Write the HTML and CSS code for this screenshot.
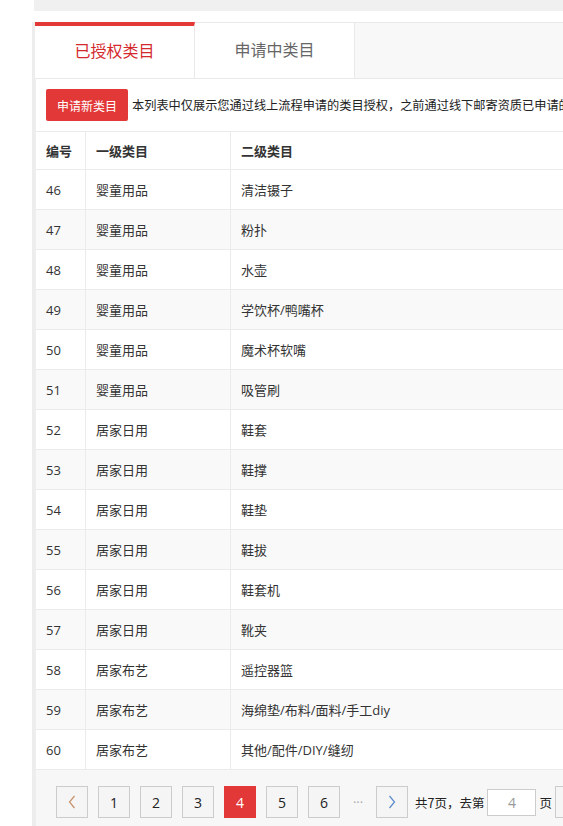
FILE: index.html
```html
<!DOCTYPE html>
<html lang="zh-CN">
<head>
    <meta charset="UTF-8">
    <title>类目授权</title>
    <link rel="stylesheet" href="styles.css">
</head>
<body>
    <div class="top-bar"></div>
    <div class="main">
        <div class="tabs">
            <div class="tab active">已授权类目</div>
            <div class="tab">申请中类目</div>
        </div>
        <div class="panel">
            <div class="toolbar">
                <button class="btn-apply">申请新类目</button>
                <span class="tip">本列表中仅展示您通过线上流程申请的类目授权，之前通过线下邮寄资质已申请的类目不在此处展示</span>
            </div>
            <table class="cat-table">
                <thead>
                    <tr>
                        <th class="col-no">编号</th>
                        <th class="col-first">一级类目</th>
                        <th>二级类目</th>
                    </tr>
                </thead>
                <tbody>
                    <tr><td>46</td><td>婴童用品</td><td>清洁镊子</td></tr>
                    <tr><td>47</td><td>婴童用品</td><td>粉扑</td></tr>
                    <tr><td>48</td><td>婴童用品</td><td>水壶</td></tr>
                    <tr><td>49</td><td>婴童用品</td><td>学饮杯/鸭嘴杯</td></tr>
                    <tr><td>50</td><td>婴童用品</td><td>魔术杯软嘴</td></tr>
                    <tr><td>51</td><td>婴童用品</td><td>吸管刷</td></tr>
                    <tr><td>52</td><td>居家日用</td><td>鞋套</td></tr>
                    <tr><td>53</td><td>居家日用</td><td>鞋撑</td></tr>
                    <tr><td>54</td><td>居家日用</td><td>鞋垫</td></tr>
                    <tr><td>55</td><td>居家日用</td><td>鞋拔</td></tr>
                    <tr><td>56</td><td>居家日用</td><td>鞋套机</td></tr>
                    <tr><td>57</td><td>居家日用</td><td>靴夹</td></tr>
                    <tr><td>58</td><td>居家布艺</td><td>遥控器篮</td></tr>
                    <tr><td>59</td><td>居家布艺</td><td>海绵垫/布料/面料/手工diy</td></tr>
                    <tr><td>60</td><td>居家布艺</td><td>其他/配件/DIY/缝纫</td></tr>
                </tbody>
            </table>
            <div class="pager">
                <a class="page-btn arrow">
                    <svg width="10" height="14" viewBox="0 0 10 14"><path d="M7.5 1 L2.5 7 L7.5 13" fill="none" stroke="#c8906a" stroke-width="1.2"/></svg>
                </a>
                <a class="page-btn">1</a>
                <a class="page-btn">2</a>
                <a class="page-btn">3</a>
                <a class="page-btn current">4</a>
                <a class="page-btn">5</a>
                <a class="page-btn">6</a>
                <span class="dots">···</span>
                <a class="page-btn arrow">
                    <svg width="10" height="14" viewBox="0 0 10 14"><path d="M2.5 1 L7.5 7 L2.5 13" fill="none" stroke="#5a8ac8" stroke-width="1.2"/></svg>
                </a>
                <span class="jump jump-label">共7页，去第</span>
                <input class="jump-input" type="text" value="4">
                <span class="jump">页</span>
                <a class="page-btn go"></a>
            </div>
        </div>
    </div>
</body>
</html>
```

FILE: styles.css
```css
html, body {
    overflow: hidden;
}

body {
    margin: 0;
    background: #fff;
    color: #333;
    font-family: "Open Sans", "Noto Sans CJK SC", sans-serif;
    font-size: 13px;
}

.top-bar {
    margin-left: 34px;
    width: 1000px;
    height: 11px;
    background: #f0f0f0;
}

.main {
    margin-top: 11px;
    margin-left: 32px;
    width: 1000px;
    border-left: 3px solid #ededed;
}

/* tabs */
.tabs {
    display: flex;
    height: 55px;
    background: #f8f8f8;
    border-top: 1px solid #e9e9e9;
}

.tab {
    width: 160px;
    border-right: 1px solid #e9e9e9;
    background: #fff;
    color: #666;
    font-size: 16px;
    text-align: center;
    line-height: 55px;
    box-sizing: border-box;
}

.tab.active {
    color: #d42a2e;
    border-top: 4px solid #e23838;
    margin-top: -1px;
    line-height: 50px;
    height: 56px;
}

/* panel */
.panel {
    border-left: 1px solid #eee;
    border-top: 1px solid #e9e9e9;
}

.toolbar {
    display: flex;
    align-items: center;
    height: 52px;
    padding-left: 10px;
}

.btn-apply {
    height: 32px;
    padding: 0 11px;
    border: none;
    border-radius: 2px;
    background: #e23838;
    color: #fff;
    font-family: "Noto Sans CJK SC", sans-serif;
    font-size: 12px;
    margin-right: 4px;
}

.tip {
    white-space: nowrap;
    color: #222;
    font-family: "Noto Sans CJK SC", sans-serif;
    font-size: 12.2px;
}

/* table */
.cat-table {
    width: 100%;
    border-collapse: collapse;
}

.cat-table th,
.cat-table td {
    border: 1px solid #ebebeb;
    border-left: none;
    text-align: left;
    padding: 0 10px;
    height: 39px;
    color: #333;
}

.cat-table th {
    height: 37px;
    font-weight: bold;
    font-family: "Noto Sans CJK SC", sans-serif;
}

.cat-table td {
    font-family: "Open Sans", "Noto Sans CJK SC", sans-serif;
}

.cat-table .col-no {
    width: 29px;
}

.cat-table .col-first {
    width: 124px;
}

.cat-table tbody tr:nth-child(even) {
    background: #f9f9f9;
}

/* pagination */
.pager {
    display: flex;
    align-items: center;
    gap: 10px;
    background: #f7f7f7;
    padding: 16px 20px 20px;
}

.page-btn {
    width: 30px;
    height: 30px;
    border: 1px solid #ccc;
    background: #f5f5f5;
    display: flex;
    align-items: center;
    justify-content: center;
    font-size: 14px;
    color: #222;
}

.page-btn.current {
    background: #e23838;
    border-color: #e23838;
    color: #fff;
}

.page-btn.go {
    width: 48px;
}

.dots {
    width: 16px;
    color: #aaa;
    text-align: center;
}

.jump {
    color: #222;
    font-family: "Noto Sans CJK SC", sans-serif;
    font-size: 12.5px;
    margin-right: -7px;
}

.jump-label {
    margin-left: -3px;
}

.jump-input {
    width: 49px;
    height: 27px;
    border: 1px solid #ccc;
    box-sizing: border-box;
    text-align: center;
    color: #999;
    font-size: 14px;
    font-family: "Open Sans", sans-serif;
    padding: 0;
    margin-right: -7px;
}
```
